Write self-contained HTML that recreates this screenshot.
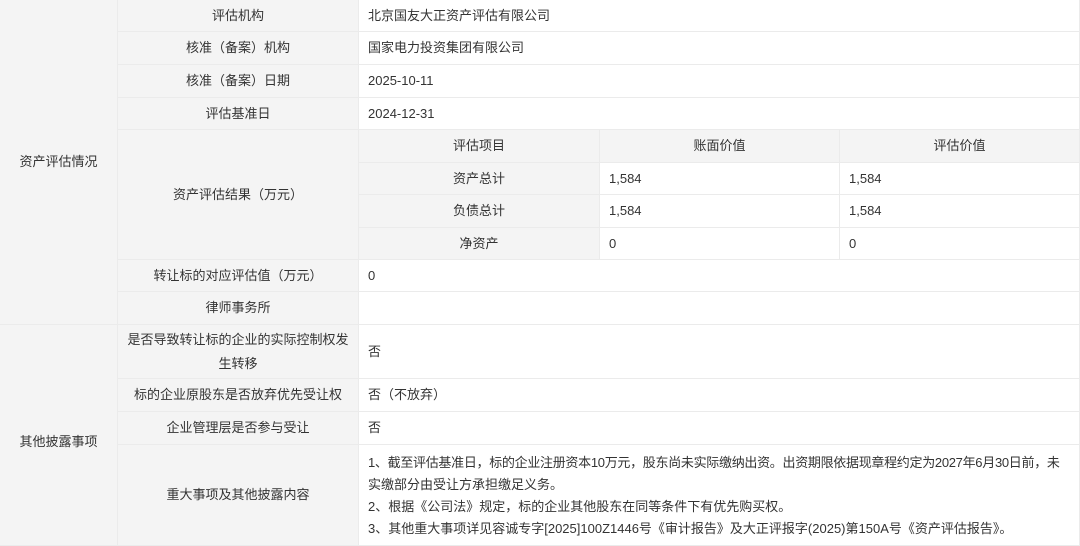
<!DOCTYPE html>
<html><head><meta charset="utf-8"><style>
*{margin:0;padding:0;box-sizing:border-box}
body{width:1080px;height:546px;overflow:hidden;background:#fff;position:relative;font-family:"Liberation Sans","Noto Sans CJK SC",sans-serif;font-size:13px;color:#333}
.c{position:absolute;display:flex;align-items:center;border-right:1px solid #ebebeb;border-bottom:1px solid #ebebeb;line-height:22px}
.g{background:#f4f4f4;justify-content:center;text-align:center}
.w{background:#fff;padding-left:9px}
</style></head><body>
<div class="c g" style="left:0;top:0;width:118px;height:325px">资产评估情况</div>
<div class="c g" style="left:0;top:325px;width:118px;height:221px;padding-top:14px">其他披露事项</div>

<div class="c g" style="left:118px;top:0;width:241px;height:32px">评估机构</div>
<div class="c w" style="left:359px;top:0;width:721px;height:32px">北京国友大正资产评估有限公司</div>
<div class="c g" style="left:118px;top:32px;width:241px;height:33px">核准（备案）机构</div>
<div class="c w" style="left:359px;top:32px;width:721px;height:33px">国家电力投资集团有限公司</div>
<div class="c g" style="left:118px;top:65px;width:241px;height:33px">核准（备案）日期</div>
<div class="c w" style="left:359px;top:65px;width:721px;height:33px">2025-10-11</div>
<div class="c g" style="left:118px;top:98px;width:241px;height:32px">评估基准日</div>
<div class="c w" style="left:359px;top:98px;width:721px;height:32px">2024-12-31</div>

<div class="c g" style="left:118px;top:130px;width:241px;height:130px">资产评估结果（万元）</div>
<div class="c g" style="left:359px;top:130px;width:241px;height:33px">评估项目</div>
<div class="c g" style="left:600px;top:130px;width:240px;height:33px">账面价值</div>
<div class="c g" style="left:840px;top:130px;width:240px;height:33px">评估价值</div>
<div class="c g" style="left:359px;top:163px;width:241px;height:32px">资产总计</div>
<div class="c w" style="left:600px;top:163px;width:240px;height:32px">1,584</div>
<div class="c w" style="left:840px;top:163px;width:240px;height:32px">1,584</div>
<div class="c g" style="left:359px;top:195px;width:241px;height:33px">负债总计</div>
<div class="c w" style="left:600px;top:195px;width:240px;height:33px">1,584</div>
<div class="c w" style="left:840px;top:195px;width:240px;height:33px">1,584</div>
<div class="c g" style="left:359px;top:228px;width:241px;height:32px">净资产</div>
<div class="c w" style="left:600px;top:228px;width:240px;height:32px">0</div>
<div class="c w" style="left:840px;top:228px;width:240px;height:32px">0</div>

<div class="c g" style="left:118px;top:260px;width:241px;height:32px">转让标的对应评估值（万元）</div>
<div class="c w" style="left:359px;top:260px;width:721px;height:32px">0</div>
<div class="c g" style="left:118px;top:292px;width:241px;height:33px">律师事务所</div>
<div class="c w" style="left:359px;top:292px;width:721px;height:33px"></div>

<div class="c g" style="left:118px;top:325px;width:241px;height:54px;padding:0 4px;line-height:24px">是否导致转让标的企业的实际控制权发<br>生转移</div>
<div class="c w" style="left:359px;top:325px;width:721px;height:54px">否</div>
<div class="c g" style="left:118px;top:379px;width:241px;height:33px">标的企业原股东是否放弃优先受让权</div>
<div class="c w" style="left:359px;top:379px;width:721px;height:33px">否（不放弃）</div>
<div class="c g" style="left:118px;top:412px;width:241px;height:33px">企业管理层是否参与受让</div>
<div class="c w" style="left:359px;top:412px;width:721px;height:33px">否</div>
<div class="c g" style="left:118px;top:445px;width:241px;height:101px">重大事项及其他披露内容</div>
<div class="c w" style="left:359px;top:445px;width:721px;height:101px;display:block;padding-top:7px;padding-right:0;line-height:22px;white-space:nowrap"><span style="letter-spacing:-0.3px">1、截至评估基准日，标的企业注册资本10万元，股东尚未实际缴纳出资。出资期限依据现章程约定为2027年6月30日前，未</span><br>实缴部分由受让方承担缴足义务。<br>2、根据《公司法》规定，标的企业其他股东在同等条件下有优先购买权。<br>3、其他重大事项详见容诚专字[2025]100Z1446号《审计报告》及大正评报字(2025)第150A号《资产评估报告》。</div>
</body></html>
